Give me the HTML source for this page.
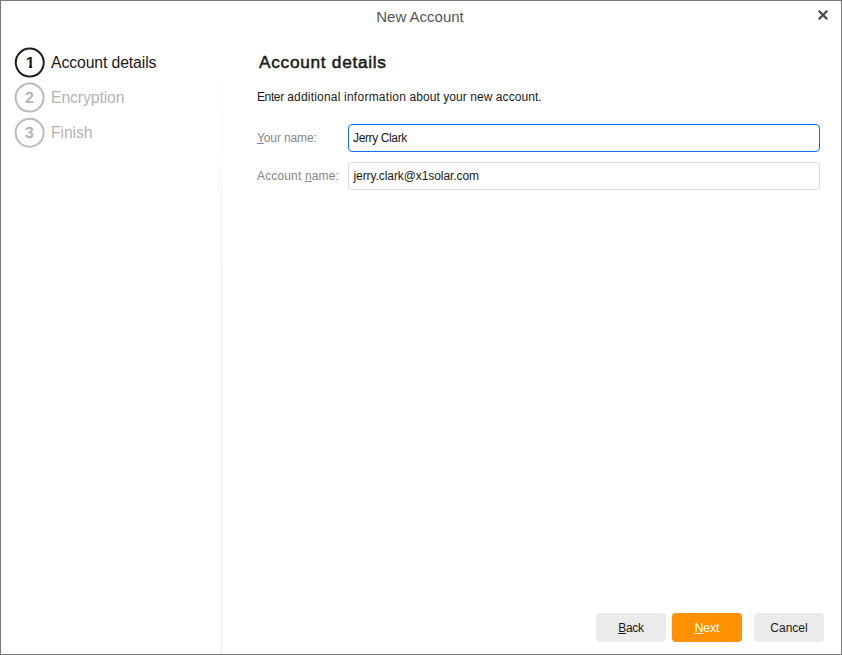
<!DOCTYPE html>
<html><head><meta charset="utf-8"><title>New Account</title>
<style>
html,body{margin:0;padding:0;background:#fff;}
body{width:842px;height:655px;overflow:hidden;position:relative;font-family:"Liberation Sans",sans-serif;color:#1a1a1a;}
#win{position:absolute;left:0;top:0;width:840px;height:653px;border:1px solid #787878;background:#fff;}
.t{position:absolute;white-space:nowrap;line-height:1;}
#title{left:-1px;width:842px;text-align:center;top:9px;font-size:15px;color:#555;}
#sep{position:absolute;left:221px;top:34px;width:1px;height:620px;background:linear-gradient(to bottom,#fff 0,#ececec 260px,#ebebeb 100%);}
.step{font-size:15.8px;letter-spacing:-0.12px;}
.off{color:#b4b4b4;}
.num{font-weight:bold;font-size:16px;text-rendering:geometricPrecision;text-align:center;width:30px;}
.one{display:inline-block;clip-path:polygon(0 0,100% 0,100% 0.59em,0.406em 0.59em,0.406em 1em,0.2125em 1em,0.2125em 0.59em,0 0.59em);}
#h{left:259px;top:54px;font-size:17.3px;-webkit-text-stroke:0.5px #1a1a1a;letter-spacing:0.7px;}
#desc{left:257px;top:91px;font-size:12px;letter-spacing:0.06px;}
.lbl{font-size:12px;color:#868686;left:257px;}
.inp{position:absolute;left:348px;width:470px;height:26px;border:1px solid #dcdcdc;border-radius:4px;background:#fff;}
.inp.f{border-color:#0a72f0;}
.val{font-size:12px;left:353px;}
.btn{position:absolute;top:613px;width:70px;height:27px;padding-top:2px;border-radius:4px;background:#ebebeb;font-size:12px;text-align:center;line-height:27px;}
.btn.p{background:#ff9100;color:#fff;}
u{text-decoration:underline;text-underline-offset:1px;}
</style></head><body>
<div id="win"></div>
<div id="sep"></div>
<div class="t" id="title">New Account</div>
<svg style="position:absolute;left:0;top:0" width="842" height="655">
<circle cx="29.75" cy="62.6" r="14" fill="none" stroke="#1e1e1e" stroke-width="2"/>
<circle cx="29.6" cy="97.6" r="14" fill="none" stroke="#bcbcbc" stroke-width="2"/>
<circle cx="29.6" cy="132.7" r="14" fill="none" stroke="#bcbcbc" stroke-width="2"/>
<path d="M818.75 10.75 L827.25 19.25 M827.25 10.75 L818.75 19.25" stroke="#4c4c4c" stroke-width="2.3" fill="none"/>
</svg>
<div class="t num" style="left:15.1px;top:56px;"><span class="one">1</span></div>
<div class="t num off" style="left:14.4px;top:91px;">2</div>
<div class="t num off" style="left:14.4px;top:126px;">3</div>
<div class="t step" style="left:51px;top:55px;">Account details</div>
<div class="t step off" style="left:51px;top:90px;">Encryption</div>
<div class="t step off" style="left:51px;top:125px;">Finish</div>
<div class="t" id="h">Account details</div>
<div class="t" id="desc"><span style="letter-spacing:-0.39px">Enter</span> <span style="letter-spacing:0.21px">additional</span> <span style="letter-spacing:0.25px">information</span> about your new account.</div>
<div class="t lbl" style="top:132px;letter-spacing:-0.12px;"><u>Y</u>our name:</div>
<div class="t lbl" style="top:170px;letter-spacing:0.15px;">Account <u>n</u>ame:</div>
<div class="inp f" style="top:124px;"></div>
<div class="inp" style="top:162px;"></div>
<div class="t val" style="top:132px;letter-spacing:-0.37px;">Jerry Clark</div>
<div class="t val" style="top:170px;letter-spacing:-0.08px;left:353.5px;">jerry.clark@x1solar.com</div>
<div class="btn" style="left:596px;letter-spacing:-0.3px;"><u>B</u>ack</div>
<div class="btn p" style="left:672px;"><u>N</u>ext</div>
<div class="btn" style="left:754px;">Cancel</div>
</body></html>
